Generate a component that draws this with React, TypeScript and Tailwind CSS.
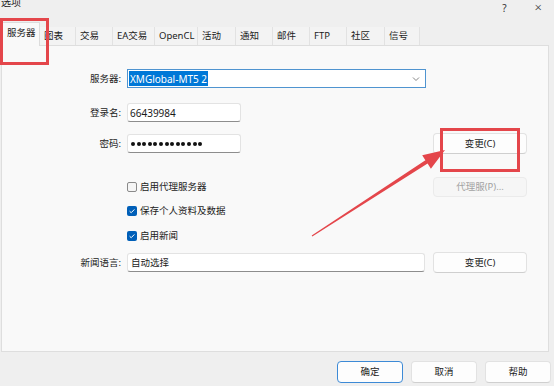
import React from "react";

const tabs: { label: string; w: string; active?: boolean }[] = [
  { label: "服务器", w: "w-[38px]", active: true },
  { label: "图表", w: "w-[36px]" },
  { label: "交易", w: "w-[37px]" },
  { label: "EA交易", w: "w-[42px]" },
  { label: "OpenCL", w: "w-[43px]" },
  { label: "活动", w: "w-[38px]" },
  { label: "通知", w: "w-[37px]" },
  { label: "邮件", w: "w-[37px]" },
  { label: "FTP", w: "w-[37px]" },
  { label: "社区", w: "w-[38px]" },
  { label: "信号", w: "w-[35px]" },
];

const Label = ({ children }: { children: React.ReactNode }) => (
  <div className="w-[119px] mr-[6px] shrink-0 text-right">{children}</div>
);

const Button = ({
  children,
  disabled,
  primary,
  className = "",
}: {
  children: React.ReactNode;
  disabled?: boolean;
  primary?: boolean;
  className?: string;
}) => (
  <div
    className={
      "flex items-center justify-center rounded-[4px] border " +
      (primary
        ? "border-[#3d8ad6] bg-[#fdfdfd] text-[#1b1b1b] "
        : disabled
        ? "border-[#ebebeb] bg-[#f6f6f6] text-[#a2a2a2] "
        : "border-[#e2e2e2] border-b-[#cfcfcf] bg-[#fdfdfd] text-[#1b1b1b] ") +
      className
    }
  >
    {children}
  </div>
);

const CheckBox = ({ checked, label }: { checked?: boolean; label: string }) => (
  <div className="flex items-center gap-[3px]">
    {checked ? (
      <div className="w-[10px] h-[10px] rounded-[2px] bg-[#005fb8] flex items-center justify-center">
        <svg width="8" height="8" viewBox="0 0 8 8">
          <path d="M1.6 4.2 L3.2 5.7 L6.4 2.4" fill="none" stroke="#fff" strokeWidth="1" />
        </svg>
      </div>
    ) : (
      <div className="w-[10px] h-[10px] rounded-[2px] border border-[#8a8a8a] bg-[#f5f5f5]" />
    )}
    <span>{label}</span>
  </div>
);

const TextBox = ({ className = "", children }: { className?: string; children?: React.ReactNode }) => (
  <div
    className={
      "flex items-center h-[19px] rounded-[3px] border border-[#e3e3e3] border-b-[#8d8d8d] bg-white pl-[2px] " +
      className
    }
  >
    {children}
  </div>
);

export default function App() {
  return (
    <div className="relative w-[554px] h-[386px] overflow-hidden bg-[#efefef] text-[#1b1b1b] text-[9.5px] leading-none font-['Noto_Sans','Noto_Sans_CJK_SC',sans-serif]">
      {/* TITLE */}
      <div className="h-[22px] flex items-start">
        <span className="-mt-[3px] pl-[1px] text-[10px]">选项</span>
        <span className="ml-auto mt-[3px] text-[10px] text-[#333]">?</span>
        <span className="ml-[28px] mr-[12px] mt-[1px] text-[13px] text-[#333] font-light">×</span>
      </div>

      {/* TABS */}
      <div className="h-[23px] pl-[2px] flex items-end relative z-10">
        {tabs.map((t) =>
          t.active ? (
            <div
              key={t.label}
              className={`${t.w} h-[24px] -mb-px pl-[4px] pt-[5px] bg-[#f9f9f9] border border-b-0 border-[#dcdcdc]`}
            >
              {t.label}
            </div>
          ) : (
            <div
              key={t.label}
              className={`${t.w} h-[18px] pl-[4px] flex items-center bg-[#f3f3f3] border-r border-[#e2e2e2]`}
            >
              {t.label}
            </div>
          )
        )}
      </div>

      {/* PANEL */}
      <div className="ml-[1px] w-[548px] h-[307px] bg-[#f9f9f9] border border-[#dedede] pt-[23px]">
        {/* server */}
        <div className="flex items-center h-[19px]">
          <Label>服务器:</Label>
          <div className="w-[299px] h-[19px] border border-[#4f94d0] bg-white flex items-center pl-[1px] pr-[5px]">
            <span className="bg-[#0078d7] text-white text-[10px] h-[15px] flex items-center px-[1px]">
              XMGlobal-MT5 2
            </span>
            <svg className="ml-auto" width="8" height="6" viewBox="0 0 8 6">
              <path d="M1 1.5 L4 4.5 L7 1.5" fill="none" stroke="#777" strokeWidth="0.9" />
            </svg>
          </div>
        </div>

        {/* login */}
        <div className="flex items-center h-[19px] mt-[15px]">
          <Label>登录名:</Label>
          <TextBox className="w-[114px] text-[10px]">66439984</TextBox>
        </div>

        {/* password */}
        <div className="flex items-center h-[21px] mt-[11px]">
          <Label>密码:</Label>
          <TextBox className="w-[114px] gap-[1.6px] pl-[3px]">
            {Array.from({ length: 13 }).map((_, i) => (
              <div key={i} className="w-[4px] h-[4px] rounded-full bg-[#111]" />
            ))}
          </TextBox>
          <Button className="ml-[192px] w-[94px] h-[21px]">变更(C)</Button>
        </div>

        {/* proxy */}
        <div className="flex items-center h-[20px] mt-[23px]">
          <div className="w-[125px] shrink-0" />
          <div className="w-[300px]">
            <CheckBox label="启用代理服务器" />
          </div>
          <Button disabled className="ml-[6px] w-[94px] h-[20px]">
            代理服(P)...
          </Button>
        </div>

        <div className="flex items-center h-[19px] mt-[4px]">
          <div className="w-[125px] shrink-0" />
          <CheckBox checked label="保存个人资料及数据" />
        </div>

        <div className="flex items-center h-[19px] mt-[6px]">
          <div className="w-[125px] shrink-0" />
          <CheckBox checked label="启用新闻" />
        </div>

        {/* news language */}
        <div className="flex items-center h-[21px] mt-[7px]">
          <Label>新闻语言:</Label>
          <TextBox className="w-[298px] pl-[3px]">自动选择</TextBox>
          <Button className="ml-[8px] w-[94px] h-[21px]">变更(C)</Button>
        </div>
      </div>

      {/* FOOTER */}
      <div className="flex justify-end gap-[8px] pr-[3px] pt-[9px]">
        <Button primary className="w-[66px] h-[22px]">确定</Button>
        <Button className="w-[66px] h-[22px]">取消</Button>
        <Button className="w-[66px] h-[22px]">帮助</Button>
      </div>

      {/* ANNOTATIONS */}
      <svg className="absolute inset-0 pointer-events-none z-20" width="554" height="386">
        <rect x="1.5" y="19.5" width="46" height="44" fill="none" stroke="#e4464b" strokeWidth="3" />
        <rect x="441.5" y="129.5" width="77" height="41" fill="none" stroke="#e4464b" strokeWidth="3" />
        <polygon
          points="312.3,236.4 427.6,163.6 430.9,168.7 445,150 422.2,155.2 425.4,160.2 311.7,235.6"
          fill="#e4464b"
        />
      </svg>
    </div>
  );
}
